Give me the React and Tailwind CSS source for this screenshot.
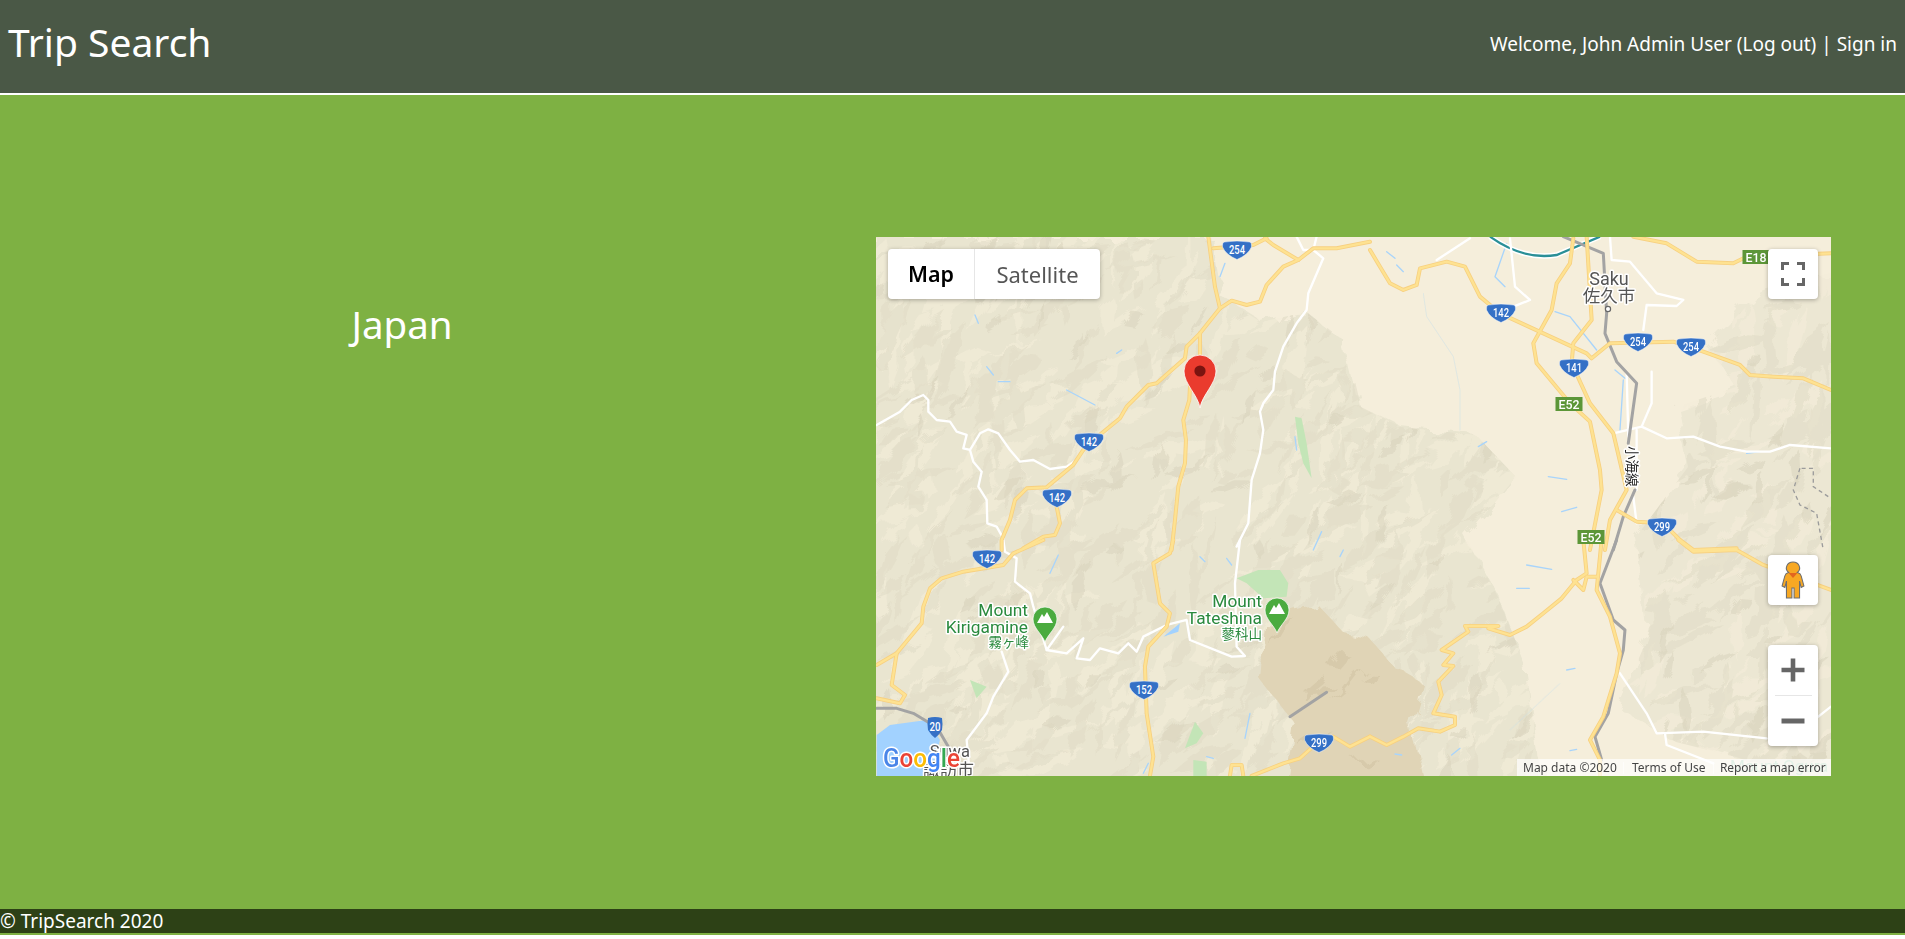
import React from 'react';

// Hill shading: seeded so the map looks the same on every load
let seed = 41;
const rand = () => {
  seed = (seed * 1664525 + 1013904223) % 4294967296;
  return seed / 4294967296;
};

const makeStreaks = (count, minLen, maxLen, maxWid) => {
  let out = '';
  for (let i = 0; i < count; i++) {
    const cx = rand() * 955;
    const cy = rand() * 539;
    const len = minLen + rand() * (maxLen - minLen);
    const wid = 2 + rand() * maxWid;
    const a = (-50 + (rand() - 0.5) * 80) * (Math.PI / 180);
    const ux = Math.cos(a);
    const uy = Math.sin(a);
    const p = (s, t) => `${(cx + ux * s - uy * t).toFixed(1)},${(cy + uy * s + ux * t).toFixed(1)}`;
    out += `M${p(-len, 0)}L${p(-len / 3, wid)}L${p(len / 2, wid * 0.6)}L${p(len, 0)}L${p(len / 4, -wid)}L${p(-len / 2, -wid * 0.5)}Z`;
  }
  return out;
};

const DARK_HILLS = makeStreaks(620, 10, 38, 7);
const LIGHT_HILLS = makeStreaks(520, 10, 40, 8);
const SHADOW_HILLS = makeStreaks(130, 8, 24, 5);

const TERRAIN_LEFT =
  'M0,0L335,0L345,60L385,85L430,75L470,105L485,170L525,190L600,198L640,240L590,300L622,360L650,430L668,560L-20,560L-20,0Z';
const TERRAIN_RIGHT =
  'M975,30L885,55L830,110L860,150L800,170L812,230L760,300L772,400L742,470L800,505L860,520L975,560Z';
const BROWN =
  'M390,378L440,366L468,396L494,402L520,432L548,448L536,490L552,560L408,560L418,486L384,442Z';

// Road data is traced per quadrant of the map, in 3x crop units
const TILES = [
  {
    at: 'translate(-6,-7) scale(.3333)',
    yellow: [
      'M1015,20L1035,170L1050,235',
      'M1050,235L990,310L950,350L945,385L860,460L835,465L770,530L750,565L695,610L640,660L610,705L550,755L530,772L470,775L435,810L420,870L395,930L395,960',
      'M1050,235L1085,212L1130,225L1170,215L1190,165L1240,110L1285,90L1210,45L1185,25',
      'M1285,90L1330,55L1400,55L1500,35',
      'M1030,55L1150,45L1190,25',
      'M990,310L990,380',
      'M960,470L958,510L940,570L948,630L945,700L925,770L915,870L905,960',
      'M560,830L570,880L555,915L520,920L460,955',
    ],
    white: [
      'M1340,20L1330,60L1360,85L1315,190L1310,240L1280,280L1240,350L1215,425L1210,480L1180,520L1170,545L1180,600L1170,670L1145,750L1135,880L1100,950',
      'M20,585L90,545L125,510L160,495L175,510L175,545L200,570L240,575L260,605L290,615L280,655L300,660L330,610L355,598L385,610L420,660L450,695L490,690L540,717L590,710L620,690',
      'M300,660L310,695L335,725L325,770L350,810L352,880L380,890L400,925',
      'M1280,20L1300,60L1330,60',
    ],
    blue: [
      'M315,255L325,280',
      'M350,410L370,435',
      'M385,455L420,455',
      'M590,480L675,525',
      'M740,370L755,360',
      'M1050,140L1065,100',
      'M1275,620L1280,660',
      'M1330,960L1355,905',
    ],
    green: ['M1275,560L1295,565L1310,640L1325,745L1300,700L1285,640Z'],
  },
  {
    at: 'translate(494,-7) scale(.3333)',
    yellow: [
      'M0,60L30,110L60,160L100,180L140,165L150,115L230,95L285,110L330,200L390,250L650,370L665,385L720,340L910,335L1000,365L1110,405L1140,435L1210,440L1300,445L1383,480',
      'M610,25L600,100L560,160L545,240L490,340L500,400L600,520L660,575L690,720L695,780L660,960',
      'M650,20L665,270L610,340L605,400L660,520L730,610L770,780L720,870L705,960',
      'M740,840L800,875L880,880L930,930L970,960L1100,955',
      'M790,20L890,40L980,95L1090,100L1130,80L1383,70',
    ],
    white: [
      'M200,90L300,25',
      'M420,25L435,170L480,210L430,230',
      'M720,20L725,90L780,95L860,190L940,210L920,228L830,225L820,300',
      'M845,425L845,520L815,590L730,610',
      'M815,590L890,625L970,620L1050,650L1130,665L1200,665L1260,645L1383,655',
      'M770,430L775,620',
      'M800,600L800,780',
      'M790,800L800,880',
    ],
    rail: ['M580,20L700,70L710,250L705,310L740,395L800,460L775,640', 'M795,780L760,860L730,960'],
    blue: [
      'M50,65L75,85',
      'M80,105L100,125',
      'M410,40L375,140L405,170',
      'M555,245L600,260L680,360',
      'M735,420L765,445',
      'M760,450L750,600',
      'M535,740L590,748',
      'M1130,670L1170,665',
      'M325,650L350,635',
      'M575,845L620,832',
    ],
    faint: ['M160,190L170,260L250,380L270,480L270,600'],
  },
  {
    at: 'translate(-6,303) scale(.3333)',
    yellow: [
      'M520,0L430,40L400,75L280,95L215,115L180,145L160,200L155,250L80,340L20,375',
      'M80,340L65,435L105,465L90,490L20,475',
      'M910,0L900,40L850,70L870,190L900,220L890,260L835,320L825,380L830,520L850,650L840,708',
      'M1080,708L1085,675L1115,675L1120,708',
      'M1145,708L1240,670L1290,655L1340,610',
      'M1390,590L1440,620L1500,590',
    ],
    white: [
      'M400,0L405,35L440,55L435,125L480,160L490,200L530,330L590,340L640,295L620,355L660,360L690,325L745,340L775,310L800,335L820,290L890,255L950,240L960,300L1085,350L1125,348L1100,320L1095,130L1110,0',
      'M395,335L415,395L370,470L350,520L290,600L300,708',
      'M530,330L580,260',
    ],
    rail: ['M20,505L80,505L130,520L180,550', 'M200,560L235,620', 'M1260,530L1370,457'],
    blue: [
      'M540,100L565,45',
      'M990,50L1005,65',
      'M1070,55L1085,75',
      'M1410,50L1420,30',
      'M1140,520L1125,595',
      'M1010,650L1030,655',
      'M820,700L835,670',
    ],
    water: ['M20,585L60,555L170,540L210,600L180,708L20,708Z', 'M880,290L930,250L925,275L895,285Z'],
    green: [
      'M1100,115L1165,90L1230,90L1255,130L1250,170L1180,175L1130,130Z',
      'M300,420L350,440L320,475Z',
      'M975,545L1000,580L980,610L945,625Z',
      'M970,660L1010,665L1010,708L970,708Z',
    ],
  },
  {
    at: 'translate(494,303) scale(.3333)',
    yellow: [
      'M640,0L650,100L620,120L575,175L520,220L470,260L420,285L355,265L385,258L285,258L295,275L215,330L250,340L220,375L250,378L205,425L215,465L190,520L255,530L255,555L210,575L145,565L100,590L50,615L0,590',
      'M695,0L680,150L720,230L750,340L740,400L700,530L660,600L690,660L690,708',
      'M610,120L640,150L650,110L680,110',
      'M925,0L970,35L1100,30L1180,75L1383,150',
    ],
    white: ['M750,400L830,520L860,580L1000,575L1190,595', 'M885,580L890,615L1030,670', 'M1345,530L1383,500'],
    rail: ['M740,0L690,130L730,240L765,270L760,330L740,400L715,520L675,590L695,660'],
    blue: ['M470,75L545,88', 'M440,145L478,145', 'M245,645L270,625', 'M75,642L95,645', 'M590,390L615,385', 'M600,632L620,628'],
    faint: ['M420,570L570,430'],
  },
];

const SHIELDS = [
  ['254', 361, 13],
  ['142', 213, 205],
  ['142', 181, 261],
  ['142', 625, 76],
  ['254', 762, 105],
  ['254', 815, 110],
  ['141', 698, 131],
  ['299', 786, 290],
  ['142', 111, 322],
  ['152', 268, 453],
  ['299', 443, 506],
];

const EXITS = [
  ['E52', 693, 167],
  ['E52', 715, 300],
  ['E18', 880, 20],
];

const HALO = { stroke: '#fff', strokeWidth: 3, paintOrder: 'stroke', strokeLinejoin: 'round' };

const Layer = ({ name, ...props }) => (
  <g fill="none" strokeLinecap="round" strokeLinejoin="round" {...props}>
    {TILES.map((tile) =>
      (tile[name] || []).map((d) => (
        <path key={tile.at + d} d={d} transform={tile.at} />
      ))
    )}
  </g>
);

const Shield = ({ label, x, y }) => (
  <g transform={`translate(${x},${y})`}>
    <path
      d="M-13,-8Q0,-10 13,-8Q15,-7 14.5,-3Q11,5 0,9.5Q-11,5 -14.5,-3Q-15,-7 -13,-8Z"
      fill="#3470c6"
      stroke="#fff"
      strokeWidth=".5"
    />
    <text y="3.5" textAnchor="middle" fontSize="12" fontWeight="500" fill="#fff" textLength="16" lengthAdjust="spacingAndGlyphs">
      {label}
    </text>
  </g>
);

const MountainPin = ({ x, y }) => (
  <g transform={`translate(${x},${y})`}>
    <path d="M0,22C-3,14 -12,8 -12,-1A12,12 0 1 1 12,-1C12,8 3,14 0,22Z" fill="#4bab3f" stroke="#fff" strokeWidth=".7" />
    <path d="M-8,3L-3,-6L-1,-3L2,-8L8,3Z" fill="#fff" />
  </g>
);

const MapDrawing = () => (
  <svg viewBox="0 0 955 539" className="h-full w-full bg-[#f5eedb] [font-family:Roboto,'Noto_Sans_CJK_JP',sans-serif]">
    <defs>
      <filter id="rough" x="-5%" y="-5%" width="110%" height="110%">
        <feTurbulence type="fractalNoise" baseFrequency=".035" numOctaves="3" seed="7" />
        <feDisplacementMap in="SourceGraphic" scale="26" />
      </filter>
      <filter id="rougher" x="-5%" y="-5%" width="110%" height="110%">
        <feTurbulence type="fractalNoise" baseFrequency=".06" numOctaves="2" seed="3" />
        <feDisplacementMap in="SourceGraphic" scale="12" />
        <feGaussianBlur stdDeviation=".5" />
      </filter>
      <clipPath id="hills">
        <path d={TERRAIN_LEFT} />
        <path d={TERRAIN_RIGHT} />
      </clipPath>
      <clipPath id="brown">
        <path d={BROWN} />
      </clipPath>
    </defs>

    {/* terrain */}
    <g filter="url(#rough)">
      <path d={TERRAIN_LEFT} fill="#e9e5d0" />
      <path d={TERRAIN_RIGHT} fill="#ece7d3" />
    </g>
    <g clipPath="url(#hills)">
      <g filter="url(#rougher)">
        <path d={LIGHT_HILLS} fill="#f3edd9" opacity=".6" />
        <path d={DARK_HILLS} fill="#e1dcc6" opacity=".6" />
        <path d={SHADOW_HILLS} fill="#d8d2bb" opacity=".5" />
      </g>
    </g>
    <g filter="url(#rough)">
      <path d={BROWN} fill="#e0d4b6" />
      <path d={SHADOW_HILLS} fill="#d3c6a7" opacity=".7" clipPath="url(#brown)" />
    </g>

    {/* water and parks */}
    <Layer name="water" fill="#a2d2ff" stroke="none" />
    <Layer name="green" fill="#c3e5b7" stroke="none" />
    <Layer name="blue" stroke="#a8d4fb" strokeWidth="4" />
    <Layer name="faint" stroke="#c7e0ea" strokeWidth="2" opacity=".7" />

    {/* roads */}
    <path d="M360,20C430,70 500,85 560,75L690,20" transform="translate(494,-7) scale(.3333)" fill="none" stroke="#fff" strokeWidth="16" />
    <path d="M360,20C430,70 500,85 560,75L690,20" transform="translate(494,-7) scale(.3333)" fill="none" stroke="#2a8f97" strokeWidth="7" />
    <Layer name="white" stroke="#fff" strokeWidth="7" />
    <Layer name="rail" stroke="#a3a3a3" strokeWidth="9" />
    <Layer name="yellow" stroke="#f7d080" strokeWidth="12" />
    <Layer name="yellow" stroke="#fee291" strokeWidth="7" />
    <path
      d="M1295,715L1330,715L1330,770L1375,800M1290,715L1270,780L1290,825L1340,850L1360,960"
      transform="translate(494,-7) scale(.3333)"
      fill="none"
      stroke="#9b9b9b"
      strokeWidth="4"
      strokeDasharray="12 10"
    />

    {/* highway signs */}
    {SHIELDS.map(([label, x, y]) => (
      <Shield key={`${label}-${x}`} label={label} x={x} y={y} />
    ))}
    <g transform="translate(59,491)">
      <path d="M-7,-10Q0,-12 7,-10Q8,-4 7,2Q4,7 0,10Q-4,7 -7,2Q-8,-4 -7,-10Z" fill="#3470c6" />
      <text y="3" textAnchor="middle" fontSize="12" fontWeight="500" fill="#fff" textLength="11" lengthAdjust="spacingAndGlyphs">
        20
      </text>
    </g>
    {EXITS.map(([label, x, y]) => (
      <g key={`${label}-${x}`} transform={`translate(${x},${y})`}>
        <rect x="-13.5" y="-7" width="27" height="14" fill="#5c9638" />
        <text y="4.5" textAnchor="middle" fontSize="12" fontWeight="500" fill="#fff" textLength="21" lengthAdjust="spacingAndGlyphs">
          {label}
        </text>
      </g>
    ))}

    {/* place labels */}
    <g fill="#555" style={HALO}>
      <text x="733" y="48" fontSize="18" textAnchor="middle">Saku</text>
      <text x="733" y="65" fontSize="17.5" textAnchor="middle">佐久市</text>
      <text x="94" y="520" fontSize="16.5" textAnchor="end">Suwa</text>
      <text x="98" y="539" fontSize="17" textAnchor="end">諏訪市</text>
    </g>
    <circle cx="732" cy="72" r="2.6" fill="#fff" stroke="#666" strokeWidth="1.2" />
    <text transform="translate(751,209) rotate(90)" fontSize="13.5" fill="#222" style={HALO}>小海線</text>
    <g fill="#2a8a3e" textAnchor="end" style={HALO}>
      <text x="152" y="379" fontSize="17.3">Mount</text>
      <text x="152" y="396" fontSize="17.3">Kirigamine</text>
      <text x="153" y="410" fontSize="13.5">霧ヶ峰</text>
      <text x="386" y="370" fontSize="17.3">Mount</text>
      <text x="386" y="387" fontSize="17.3">Tateshina</text>
      <text x="386" y="402" fontSize="13.5">蓼科山</text>
    </g>
    <text x="854" y="535" fontSize="17" fill="#9fcfae">Mount Ogura</text>
    <MountainPin x={169} y={383} />
    <MountainPin x={401} y={374} />

    {/* marker */}
    <g transform="translate(324,134)">
      <path d="M0,37C-2,24 -16,13 -16,0A16,16 0 1 1 16,0C16,13 2,24 0,37Z" fill="#ea3b2e" stroke="#fff" strokeWidth=".8" />
      <circle r="5.6" fill="#7a1410" />
    </g>

    {/* google logo, real text with a white edge */}
    <text x="7" y="530" fontSize="25" fontWeight="500" textLength="77" lengthAdjust="spacingAndGlyphs" stroke="#fff" strokeWidth="3" paintOrder="stroke" strokeLinejoin="round">
      <tspan fill="#4a86e8">G</tspan>
      <tspan fill="#ea4335">o</tspan>
      <tspan fill="#fbbc05">o</tspan>
      <tspan fill="#4285f4">g</tspan>
      <tspan fill="#34a853">l</tspan>
      <tspan fill="#ea4335">e</tspan>
    </text>
  </svg>
);

const MapControlShadow = 'shadow-[0_1px_4px_rgba(0,0,0,0.3)]';

const TripMap = () => (
  <div className="relative h-[539px] w-[955px] overflow-hidden">
    <MapDrawing />

    {/* Map type */}
    <div className={`absolute left-3 top-3 flex h-[50px] w-[212px] rounded-sm bg-white text-[22px] ${MapControlShadow}`}>
      <div className="flex w-[87px] items-center justify-center border-r border-[#e6e6e6] text-[21.500px] font-semibold text-black">Map</div>
      <div className="flex flex-1 items-center justify-center text-[#565656]">Satellite</div>
    </div>

    {/* Fullscreen */}
    <div className={`absolute right-[13px] top-3 flex h-[50px] w-[50px] items-center justify-center rounded-sm bg-white ${MapControlShadow}`}>
      <svg width="24" height="24" viewBox="0 0 24 24" fill="none" stroke="#666" strokeWidth="3">
        <path d="M1.5,8V1.5H8M16,1.5H22.5V8M22.5,16V22.5H16M8,22.5H1.5V16" />
      </svg>
    </div>

    {/* Pegman */}
    <div className={`absolute right-[13px] top-[318px] flex h-[50px] w-[50px] items-center justify-center rounded-sm bg-white ${MapControlShadow}`}>
      <svg width="24" height="38" viewBox="0 0 22 38" preserveAspectRatio="none">
        <path
          d="M11,1A6,6 0 0 1 15,11.5C17,12 18,13 18.500,15L21,25L18.500,26.500L17,20V37H12V27H10V37H5V20L3.500,26.500L1,25L3.500,15C4,13 5,12 7,11.500A6,6 0 0 1 11,1Z"
          fill="#f7a823"
          stroke="#6e6e6e"
          strokeWidth="1"
        />
        <path d="M7,12L11,17L15,12Z" fill="#e2661f" />
      </svg>
    </div>

    {/* Zoom */}
    <div className={`absolute right-[13px] top-[408px] flex h-[101px] w-[50px] flex-col items-center rounded-sm bg-white ${MapControlShadow}`}>
      <div className="flex h-[50px] items-center justify-center">
        <svg width="24" height="24" viewBox="0 0 24 24" fill="#666">
          <path d="M9.700,0.500H14.300V9.700H23.500V14.300H14.300V23.500H9.700V14.300H0.500V9.700H9.700Z" />
        </svg>
      </div>
      <div className="h-px w-[37px] bg-[#e6e6e6]" />
      <div className="flex h-[50px] items-center justify-center">
        <svg width="24" height="24" viewBox="0 0 24 24" fill="#666">
          <path d="M0.500,9.500H23.500V14.500H0.500Z" />
        </svg>
      </div>
    </div>

    {/* Attribution */}
    <div className="absolute bottom-0 right-0 flex h-[17px] w-[314px] items-center bg-white/70 pt-px text-[12px] leading-none text-[#444]">
      <span className="w-[106px] whitespace-nowrap pl-1.5">Map data ©2020</span>
      <span className="w-[90px] whitespace-nowrap border-l border-white/60 pl-2">Terms of Use</span>
      <span className="whitespace-nowrap border-l border-white/60 pl-1.5 tracking-[-0.15px]">Report a map error</span>
    </div>
  </div>
);

export default function App() {
  return (
    <div className="h-[935px] bg-[#7eb143] text-white [font-family:'Noto_Sans',sans-serif]">
      <header className="flex h-[95px] items-center justify-between border-b-2 border-white bg-[#4a5846] pb-2 pl-2 pr-2">
        <h1 className="text-[39px]">Trip Search</h1>
        <div className="pt-[3px] text-[19px]">
          Welcome, John Admin User (Log out) | Sign in
        </div>
      </header>

      <main className="flex h-[814px] pt-[142px]">
        <div className="w-[804px] pt-[60px] text-center text-[38.500px] leading-[54px]">Japan</div>
        <div className="ml-[72px]">
          <TripMap />
        </div>
      </main>

      <footer className="h-6 bg-[#2d4116] text-[19px] leading-6">© TripSearch 2020</footer>
    </div>
  );
}
